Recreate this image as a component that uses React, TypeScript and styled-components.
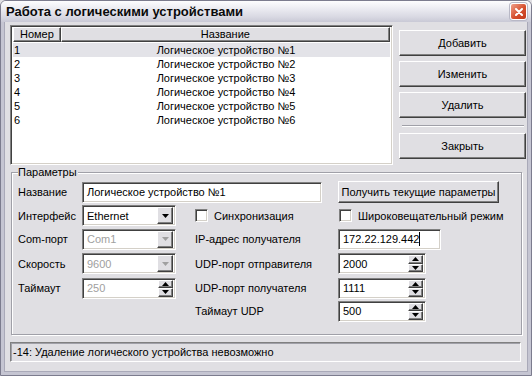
import styled, { createGlobalStyle, css } from 'styled-components'

const face = '#e0dfe3'

const GlobalStyle = createGlobalStyle`
  body {
    margin: 0;
    background: ${face};
    font-family: "Liberation Sans", Arial, sans-serif;
    font-size: 11px;
    color: #000;
  }
`

const sunken = css`
  border: 1px solid;
  border-color: #808080 #fff #fff #808080;
  box-shadow: inset 1px 1px 0 #404040, inset -1px -1px 0 #d4d0c8;
`

const raised = css`
  border: 1px solid;
  border-color: #fff #404040 #404040 #fff;
  box-shadow: inset -1px -1px 0 #808080;
`

const devices = [1, 2, 3, 4, 5, 6]

function ArrowDown({ disabled }: { disabled?: boolean }) {
  return (
    <svg width="7" height="4" viewBox="0 0 7 4">
      <path d="M0 0h7L3.5 4z" fill={disabled ? '#a0a0a0' : '#000'} />
    </svg>
  )
}

function Combo({ value, disabled }: { value: string; disabled?: boolean }) {
  return (
    <Field $w={94} $disabled={disabled}>
      <FieldText>{value}</FieldText>
      <DropButton>
        <ArrowDown disabled={disabled} />
      </DropButton>
    </Field>
  )
}

function Spin({ value, disabled, w = 94 }: { value: string; disabled?: boolean; w?: number }) {
  return (
    <Field $w={w} $disabled={disabled}>
      <FieldText>{value}</FieldText>
      <SpinButtons>
        <SpinHalf>
          <svg width="7" height="4" viewBox="0 0 7 4">
            <path d="M0 4h7L3.5 0z" fill="#000" />
          </svg>
        </SpinHalf>
        <SpinHalf>
          <svg width="7" height="4" viewBox="0 0 7 4">
            <path d="M0 0h7L3.5 4z" fill="#000" />
          </svg>
        </SpinHalf>
      </SpinButtons>
    </Field>
  )
}

function App() {
  return (
    <>
      <GlobalStyle />
      <Window>
        <TitleBar>
          <span>Работа с логическими устройствами</span>
          <CloseButton>
            <svg width="8" height="8" viewBox="0 0 8 8">
              <path d="M1 1l6 6M7 1L1 7" stroke="#fff" strokeWidth="2" strokeLinecap="round" />
            </svg>
          </CloseButton>
        </TitleBar>
        <Frame>
          <Top>
            <ListView>
              <HeaderRow>
                <HeaderCell $w={48}>Номер</HeaderCell>
                <HeaderCell $w={331}>Название</HeaderCell>
              </HeaderRow>
              {devices.map((n) => (
                <Row key={n} $selected={n === 1}>
                  <NumCell>{n}</NumCell>
                  <NameCell>Логическое устройство №{n}</NameCell>
                </Row>
              ))}
            </ListView>
            <ButtonColumn>
              <Button>Добавить</Button>
              <Button>Изменить</Button>
              <Button $gap={6}>Удалить</Button>
              <Separator />
              <Button $gap={0}>Закрыть</Button>
            </ButtonColumn>
          </Top>

          <Group>
            <Legend>Параметры</Legend>
            <Grid>
              <Label>Название</Label>
              <NameInput>
                <FieldText>Логическое устройство №1</FieldText>
              </NameInput>
              <Button $w={161} $h={22} $gap={0}>Получить текущие параметры</Button>

              <Label>Интерфейс</Label>
              <Combo value="Ethernet" />
              <Check>
                <Box />
                Синхронизация
              </Check>
              <Check $flush>
                <Box />
                Широковещательный режим
              </Check>

              <Label>Com-порт</Label>
              <Combo value="Com1" disabled />
              <SideLabel>IP-адрес получателя</SideLabel>
              <Field $w={103}>
                <FieldText>
                  172.22.129.442<Caret />
                </FieldText>
              </Field>

              <Label>Скорость</Label>
              <Combo value="9600" disabled />
              <SideLabel>UDP-порт отправителя</SideLabel>
              <Spin value="2000" w={88} />

              <Label>Таймаут</Label>
              <Spin value="250" disabled />
              <SideLabel>UDP-порт получателя</SideLabel>
              <Spin value="1111" w={88} />

              <Empty />
              <Empty />
              <SideLabel>Таймаут UDP</SideLabel>
              <Spin value="500" w={88} />
            </Grid>
          </Group>

          <StatusBar>-14: Удаление логического устройства невозможно</StatusBar>
        </Frame>
      </Window>
    </>
  )
}

export default App

const Window = styled.div`
  width: 532px;
  height: 376px;
  box-sizing: border-box;
  border: 1px solid #7c7c8e;
  border-radius: 6px 6px 0 0;
  background: ${face};
  display: flex;
  flex-direction: column;
  overflow: hidden;
`

const TitleBar = styled.div`
  height: 21px;
  flex-shrink: 0;
  display: flex;
  align-items: center;
  justify-content: space-between;
  padding: 0 4px 0 5px;
  background: linear-gradient(#fdfdfe 0%, #ececf2 35%, #d9d9e3 75%, #c9c9d6 100%);
  font: bold 13px "Liberation Sans", Arial, sans-serif;
  color: #0a0a0a;
`

const CloseButton = styled.div`
  width: 15px;
  height: 15px;
  border: 1px solid #fff;
  border-radius: 3px;
  background: linear-gradient(135deg, #f0a08a, #d6502f 55%, #c23a1c);
  display: flex;
  align-items: center;
  justify-content: center;
  box-shadow: 0 0 0 1px #b8b8c6;
`

const Frame = styled.div`
  flex: 1;
  border: 3px solid #c5c5d2;
  border-top: 0;
  box-shadow: inset 1px 0 0 #a9a9b8, inset -1px -1px 0 #a9a9b8;
  padding: 3px 2px 0 6px;
  display: flex;
  flex-direction: column;
`

const Top = styled.div`
  display: flex;
  gap: 6px;
  height: 140px;
`

const ListView = styled.div`
  ${sunken};
  width: 383px;
  box-sizing: border-box;
  background: #fff;
  padding: 1px 2px;
`

const HeaderRow = styled.div`
  display: flex;
  height: 15px;
  margin-bottom: 1px;
`

const HeaderCell = styled.div<{ $w: number }>`
  ${raised};
  box-sizing: border-box;
  width: ${(p) => p.$w}px;
  background: ${face};
  display: flex;
  align-items: center;
  justify-content: center;
  line-height: 1;
`

const Row = styled.div<{ $selected?: boolean }>`
  display: flex;
  height: 14px;
  align-items: center;
  background: ${(p) => (p.$selected ? '#e3e3e8' : 'transparent')};
`

const NumCell = styled.div`
  width: 48px;
  padding-left: 1px;
`

const NameCell = styled.div`
  flex: 1;
  text-align: center;
`

const ButtonColumn = styled.div`
  width: 127px;
  padding-top: 5px;
  display: flex;
  flex-direction: column;
`

const Button = styled.div<{ $w?: number; $h?: number; $gap?: number }>`
  ${raised};
  box-sizing: border-box;
  width: ${(p) => p.$w ?? 127}px;
  height: ${(p) => p.$h ?? 26}px;
  margin-bottom: ${(p) => p.$gap ?? 5}px;
  background: ${face};
  display: flex;
  align-items: center;
  justify-content: center;
  font-size: 11px;
  flex-shrink: 0;
`

const Separator = styled.div`
  height: 0;
  margin: 1px 2px 6px 3px;
  border-top: 1px solid #a0a0a8;
  border-bottom: 1px solid #fff;
`

const Group = styled.fieldset`
  margin: 1px 0 0 1px;
  width: 511px;
  box-sizing: border-box;
  border: 1px solid #a0a0a8;
  box-shadow: inset 1px 1px 0 #fff, 1px 1px 0 #fff;
  padding: 1px 6px 12px 6px;
  min-width: 0;
`

const Legend = styled.legend`
  padding: 0 1px 0 0;
  margin-left: 0;
  background: ${face};
  line-height: 13px;
`

const Grid = styled.div`
  display: grid;
  grid-template-columns: 64px 95px 161px 1fr;
  grid-template-rows: 24px 23px 24px 25px 24px 22px;
  align-items: center;
`

const Label = styled.div`
  white-space: nowrap;
`

const SideLabel = styled.div`
  padding-left: 18px;
  white-space: nowrap;
`

const Empty = styled.div``

const Field = styled.div<{ $w: number; $disabled?: boolean }>`
  ${sunken};
  box-sizing: border-box;
  width: ${(p) => p.$w}px;
  height: 21px;
  background: #fff;
  color: ${(p) => (p.$disabled ? '#a0a0a0' : '#000')};
  display: flex;
  align-items: center;
  padding: 2px;
`

const NameInput = styled(Field).attrs({ $w: 240 })`
  grid-column: 2 / 4;
`

const FieldText = styled.div`
  flex: 1;
  padding-left: 2px;
  white-space: nowrap;
  display: flex;
  align-items: center;
`

const Caret = styled.span`
  display: inline-block;
  width: 1px;
  height: 14px;
  background: #000;
`

const DropButton = styled.div`
  ${raised};
  box-sizing: border-box;
  width: 16px;
  height: 17px;
  background: ${face};
  display: flex;
  align-items: center;
  justify-content: center;
`

const SpinButtons = styled.div`
  display: flex;
  flex-direction: column;
  width: 15px;
  height: 17px;
`

const SpinHalf = styled.div`
  ${raised};
  box-sizing: border-box;
  flex: 1;
  background: ${face};
  display: flex;
  align-items: center;
  justify-content: center;
`

const Check = styled.label<{ $flush?: boolean }>`
  display: flex;
  align-items: center;
  gap: 6px;
  padding-left: ${(p) => (p.$flush ? 1 : 18)}px;
  white-space: nowrap;
`

const Box = styled.span`
  ${sunken};
  box-sizing: border-box;
  width: 13px;
  height: 13px;
  background: #fff;
`

const StatusBar = styled.div`
  margin: 7px 0 0 0;
  width: 511px;
  height: 20px;
  box-sizing: border-box;
  border: 1px solid;
  border-color: #808080 #fff #fff #808080;
  box-shadow: inset 1px 1px 0 #a0a0a8;
  display: flex;
  align-items: center;
  padding-left: 2px;
`
